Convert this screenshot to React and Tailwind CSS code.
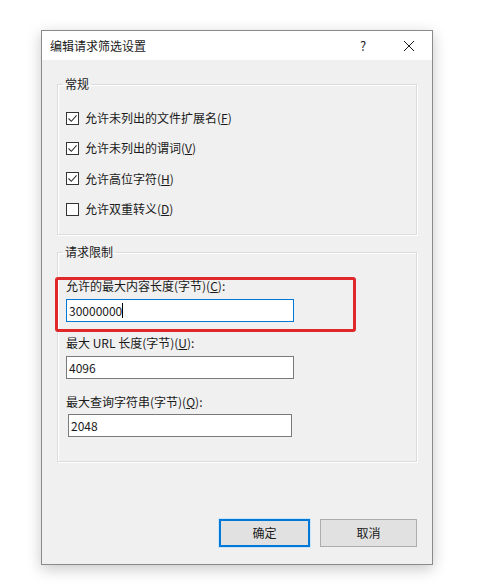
import React from "react";

const font = { fontFamily: '"Noto Sans CJK SC", "Noto Sans", sans-serif' };

function CheckBox({ checked, h, children }) {
  return (
    <div className={"flex items-center pl-[8px] " + h}>
      <div className="w-[13px] h-[13px] border border-[#333333] bg-white flex items-center justify-center">
        {checked && (
          <svg width="11" height="11" viewBox="0 0 11 11">
            <path d="M1.5 5.5 L4.3 8.3 L9.6 2.4" fill="none" stroke="#333333" strokeWidth="1.1" />
          </svg>
        )}
      </div>
      <span className="ml-[6px] text-[12px] leading-[16px] text-[#1a1a1a]">{children}</span>
    </div>
  );
}

function GroupBox({ label, className, children }) {
  return (
    <fieldset
      className={
        "border border-[#dcdcdc] shadow-[1px_1px_0_#ffffff,inset_1px_1px_0_#ffffff] " + className
      }
    >
      <legend className="ml-[5px] px-[2px] text-[12px] leading-[16px] text-[#1a1a1a]">{label}</legend>
      {children}
    </fieldset>
  );
}

export default function App() {
  return (
    <div className="w-[486px] h-[587px] bg-white pt-[30px] pl-[41px]" style={font}>
      <div className="w-[392px] h-[535px] border border-[#8a8a8a] bg-[#f0f0f0] flex flex-col shadow-[0_4px_14px_rgba(0,0,0,0.22)]">
        <div className="h-[29px] bg-white flex items-center pl-[8px] text-[12px] text-[#1a1a1a]">
          <span className="flex-1">编辑请求筛选设置</span>
          <span className="w-[12px] text-center text-[13px] mr-[34px]">?</span>
          <svg width="12" height="12" viewBox="0 0 12 12" className="mr-[17px]">
            <path d="M1 1 L11 11 M11 1 L1 11" stroke="#1a1a1a" strokeWidth="1" />
          </svg>
        </div>
        <div className="flex flex-col flex-1 px-[15px]">
          <GroupBox label="常规" className="mt-[16px] pt-[11px] pb-[10px]">
            <CheckBox checked h="h-[30px]">
              允许未列出的文件扩展名(<u>F</u>)
            </CheckBox>
            <CheckBox checked h="h-[30px]">
              允许未列出的谓词(<u>V</u>)
            </CheckBox>
            <CheckBox checked h="h-[31px]">
              允许高位字符(<u>H</u>)
            </CheckBox>
            <CheckBox h="h-[30px]">
              允许双重转义(<u>D</u>)
            </CheckBox>
          </GroupBox>
          <GroupBox label="请求限制" className="mt-[9px] pt-[18px] pb-[24px]">
            <div className="relative pl-[8px]">
              <div className="absolute left-[-3px] top-[-1px] w-[301px] h-[55px] border-[3px] border-[#e0282a] rounded-[3px]" />
              <div className="text-[12px] leading-[16px] text-[#1a1a1a]">
                允许的最大内容长度(字节)(<u>C</u>):
              </div>
              <div className="mt-[5px] w-[228px] h-[23px] border border-[#0078d7] bg-white flex items-center pl-[2px] text-[12px] text-[#1a1a1a]">
                30000000
                <span className="w-px h-[15px] bg-black" />
              </div>
            </div>
            <div className="pl-[8px] mt-[13px]">
              <div className="text-[12px] leading-[16px] text-[#1a1a1a]">
                最大 URL 长度(字节)(<u>U</u>):
              </div>
              <div className="mt-[5px] w-[228px] h-[23px] border border-[#7a7a7a] bg-white flex items-center pl-[2px] text-[12px] text-[#1a1a1a]">
                4096
              </div>
            </div>
            <div className="pl-[8px] mt-[15px]">
              <div className="text-[12px] leading-[16px] text-[#1a1a1a]">
                最大查询字符串(字节)(<u>Q</u>):
              </div>
              <div className="ml-[2px] mt-[4px] w-[224px] h-[23px] border border-[#7a7a7a] bg-white flex items-center pl-[2px] text-[12px] text-[#1a1a1a]">
                2048
              </div>
            </div>
          </GroupBox>
          <div className="mt-auto mb-[17px] flex justify-end gap-[10px]">
            <button className="w-[91px] h-[28px] border-2 border-[#0078d7] bg-[#e1e1e1] text-[12px] text-[#1a1a1a] shadow-[0_0_0_1px_#cce4f7]">
              确定
            </button>
            <button className="w-[97px] h-[28px] border border-[#adadad] bg-[#e1e1e1] text-[12px] text-[#1a1a1a]">
              取消
            </button>
          </div>
        </div>
      </div>
    </div>
  );
}
